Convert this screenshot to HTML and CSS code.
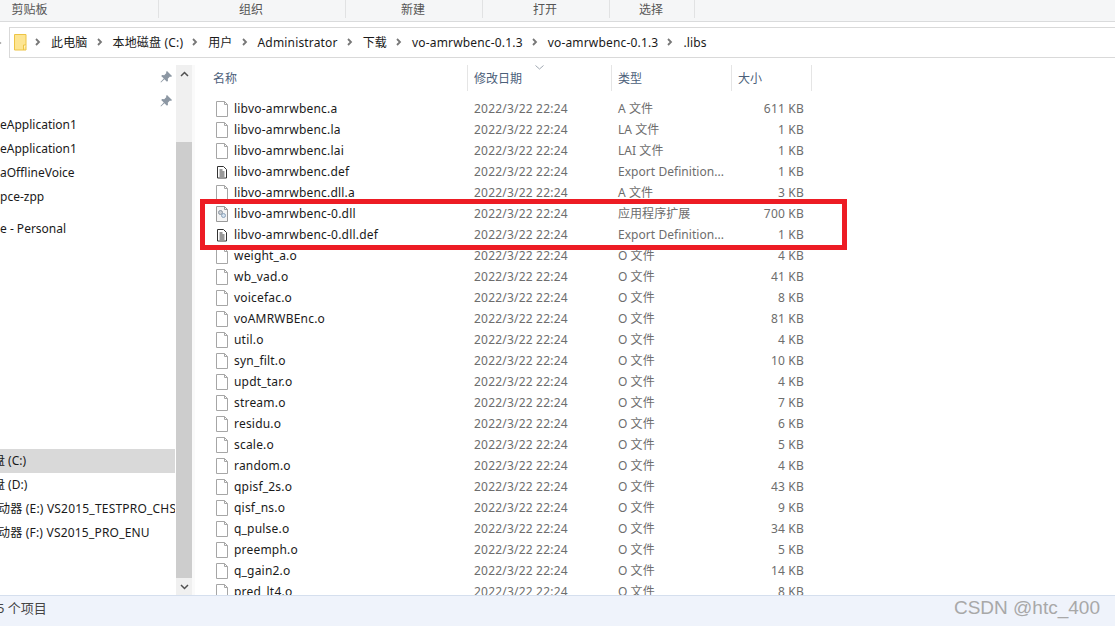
FILE: index.html
```html
<!DOCTYPE html>
<html lang="zh-CN">
<head>
  <meta charset="UTF-8" />
  <title>.libs</title>
  <link rel="stylesheet" href="styles.css">
</head>
<body>
  <div class="ribbon">
    <div class="ribbon-group first">剪贴板</div>
    <div class="ribbon-group w187">组织</div>
    <div class="ribbon-group w137">新建</div>
    <div class="ribbon-group w127">打开</div>
    <div class="ribbon-group w85">选择</div>
  </div>

  <div class="address">
    <svg class="chev cut" viewBox="0 0 8 8"><path d="M0 1l3 3-3 3" /></svg>
    <div class="address-bar">
      <svg class="folder" width="13" height="17" viewBox="0 0 13 17">
        <path d="M.5.500h11.500v15.500h-11.500z" fill="#fde592" stroke="#edc445" />
        <path d="M9.500 16v-5h2.500" fill="#fff3c4" stroke="#edc445" />
      </svg>
      <svg class="chev" viewBox="0 0 8 8"><path d="M2 1l3 3-3 3" /></svg><span>此电脑</span>
      <svg class="chev" viewBox="0 0 8 8"><path d="M2 1l3 3-3 3" /></svg><span>本地磁盘 (C:)</span>
      <svg class="chev" viewBox="0 0 8 8"><path d="M2 1l3 3-3 3" /></svg><span>用户</span>
      <svg class="chev" viewBox="0 0 8 8"><path d="M2 1l3 3-3 3" /></svg><span>Administrator</span>
      <svg class="chev" viewBox="0 0 8 8"><path d="M2 1l3 3-3 3" /></svg><span>下载</span>
      <svg class="chev" viewBox="0 0 8 8"><path d="M2 1l3 3-3 3" /></svg><span>vo-amrwbenc-0.1.3</span>
      <svg class="chev" viewBox="0 0 8 8"><path d="M2 1l3 3-3 3" /></svg><span>vo-amrwbenc-0.1.3</span>
      <svg class="chev" viewBox="0 0 8 8"><path d="M2 1l3 3-3 3" /></svg><span>.libs</span>
    </div>
  </div>

  <div class="main">
    <div class="nav">
      <div class="nav-pin">
        <svg width="12" height="12" viewBox="0 0 12 12"><path d="M7 0l5 5-1 1-1-.4-2.200 2.200.2 2-1 1-2.600-2.600L1 11.500l-.5-.5 3.300-3.400L1.200 5l1-1 2 .2L6.400 2 6 1z" fill="#8c97a3" /></svg>
      </div>
      <div class="nav-pin">
        <svg width="12" height="12" viewBox="0 0 12 12"><path d="M7 0l5 5-1 1-1-.4-2.200 2.200.2 2-1 1-2.600-2.600L1 11.500l-.5-.5 3.300-3.400L1.200 5l1-1 2 .2L6.400 2 6 1z" fill="#8c97a3" /></svg>
      </div>
      <div class="nav-item">eApplication1</div>
      <div class="nav-item">eApplication1</div>
      <div class="nav-item">aOfflineVoice</div>
      <div class="nav-item">pce-zpp</div>
      <div class="nav-item spaced">e - Personal</div>
      <div class="nav-item selected"><span class="cut-disk">盘 (C:)</span></div>
      <div class="nav-item"><span class="cut-disk">盘 (D:)</span></div>
      <div class="nav-item"><span class="cut-drive">动器 (E:) VS2015_TESTPRO_CHS</span></div>
      <div class="nav-item"><span class="cut-drive">动器 (F:) VS2015_PRO_ENU</span></div>
    </div>

    <div class="scrollbar">
      <div class="scroll-btn"><svg width="9" height="6" viewBox="0 0 9 6"><path d="M1 5l3.500-3.500L8 5" /></svg></div>
      <div class="scroll-track"><div class="scroll-thumb"></div></div>
      <div class="scroll-btn"><svg width="9" height="6" viewBox="0 0 9 6"><path d="M1 1l3.500 3.500L8 1" /></svg></div>
    </div>

    <div class="list">
      <div class="list-head">
        <div class="col-name">名称</div>
        <div class="col-date">修改日期<svg class="sort" width="9" height="5" viewBox="0 0 9 5"><path d="M.5.500l4 3.500 4-3.500" /></svg></div>
        <div class="col-type">类型</div>
        <div class="col-size">大小</div>
      </div>
      <div class="rows" id="rows"></div>
      <div class="highlight"></div>
    </div>
  </div>

  <div class="status"><span class="cut-count">5 个项目</span><span class="mark">CSDN @htc_400</span></div>

  <script>
    const files = [
      ['libvo-amrwbenc.a', 'A 文件', '611 KB', 'blank'],
      ['libvo-amrwbenc.la', 'LA 文件', '1 KB', 'blank'],
      ['libvo-amrwbenc.lai', 'LAI 文件', '1 KB', 'blank'],
      ['libvo-amrwbenc.def', 'Export Definition...', '1 KB', 'text'],
      ['libvo-amrwbenc.dll.a', 'A 文件', '3 KB', 'blank'],
      ['libvo-amrwbenc-0.dll', '应用程序扩展', '700 KB', 'dll'],
      ['libvo-amrwbenc-0.dll.def', 'Export Definition...', '1 KB', 'text'],
      ['weight_a.o', 'O 文件', '4 KB', 'blank'],
      ['wb_vad.o', 'O 文件', '41 KB', 'blank'],
      ['voicefac.o', 'O 文件', '8 KB', 'blank'],
      ['voAMRWBEnc.o', 'O 文件', '81 KB', 'blank'],
      ['util.o', 'O 文件', '4 KB', 'blank'],
      ['syn_filt.o', 'O 文件', '10 KB', 'blank'],
      ['updt_tar.o', 'O 文件', '4 KB', 'blank'],
      ['stream.o', 'O 文件', '7 KB', 'blank'],
      ['residu.o', 'O 文件', '6 KB', 'blank'],
      ['scale.o', 'O 文件', '5 KB', 'blank'],
      ['random.o', 'O 文件', '4 KB', 'blank'],
      ['qpisf_2s.o', 'O 文件', '43 KB', 'blank'],
      ['qisf_ns.o', 'O 文件', '9 KB', 'blank'],
      ['q_pulse.o', 'O 文件', '34 KB', 'blank'],
      ['preemph.o', 'O 文件', '5 KB', 'blank'],
      ['q_gain2.o', 'O 文件', '14 KB', 'blank'],
      ['pred_lt4.o', 'O 文件', '8 KB', 'blank']
    ];

    const icons = {
      blank: '<path d="M1.500.500h8l3 3v12h-11z" fill="#fff" stroke="#a6a6a6" /><path d="M9.500.500v3h3" fill="none" stroke="#a6a6a6" />',
      text: '<path d="M2.500 2.500h6l3 3v8.500h-9z" fill="#fff" stroke="#333" /><path d="M4.500 6h3M4.500 8h5M4.500 10h5M4.500 12h5" stroke="#333" fill="none" />',
      dll: '<path d="M1.500.500h8l3 3v12h-11z" fill="#f4f4f4" stroke="#999" /><path d="M9.500.500v3h3" fill="none" stroke="#999" /><circle cx="5.500" cy="6.500" r="2" fill="#c9ced4" stroke="#8c97a3" /><circle cx="8.500" cy="9.500" r="2" fill="#d5e2ef" stroke="#8ba3bb" />'
    };

    document.getElementById('rows').innerHTML = files.map(f => `<div class="row">
      <div class="col-name"><svg class="file-icon" width="14" height="16" viewBox="0 0 14 16">${icons[f[3]]}</svg>${f[0]}</div>
      <div class="col-date">2022/3/22 22:24</div>
      <div class="col-type">${f[1]}</div>
      <div class="col-size">${f[2]}</div>
    </div>`).join('');
  </script>
</body>
</html>
```

FILE: styles.css
```css
html, body {
  margin: 0;
  padding: 0;
  height: 626px;
  overflow: hidden;
  background: #fff;
  font-family: "Noto Sans", "Noto Sans CJK SC", sans-serif;
  font-size: 12px;
  color: #1a1a1a;
}

body {
  display: flex;
  flex-direction: column;
}

/* ribbon */
.ribbon {
  display: flex;
  height: 21px;
  flex: none;
  background: #f5f6f7;
  border-bottom: 1px solid #dadbdc;
  color: #555;
  overflow: hidden;
}

.ribbon-group {
  box-sizing: border-box;
  height: 18px;
  padding-right: 2px;
  line-height: 20px;
  text-align: center;
  border-right: 1px solid #e1e2e3;
  flex: none;
}

.ribbon-group.first { width: 159px; padding-right: 99px; }
.w187 { width: 187px; }
.w137 { width: 137px; }
.w127 { width: 127px; }
.w85 { width: 85px; }

/* address bar */
.address {
  display: flex;
  align-items: center;
  flex: none;
  height: 31px;
  margin-top: 5px;
  box-sizing: border-box;
}

.address-bar {
  display: flex;
  align-items: center;
  flex: 1;
  height: 31px;
  margin-left: 6px;
  padding: 0 0 1px 4px;
  box-sizing: border-box;
  letter-spacing: .17px;
  border-top: 1px solid #d9d9d9;
  border-bottom: 1px solid #d9d9d9;
  border-left: 1px solid #d9d9d9;
}

.folder { flex: none; margin-right: 7px; }

.chev {
  width: 8px;
  height: 8px;
  flex: none;
  margin: 0 9px 0 0;
}

.chev path {
  fill: none;
  stroke: #777;
  stroke-width: 1.800;
}

.chev.cut { width: 3px; margin: 0; }

.address-bar span { margin-right: 8px; white-space: nowrap; }

/* main area */
.main {
  display: flex;
  flex: 1;
  min-height: 0;
  margin-top: 7px;
}

.nav {
  width: 175px;
  flex: none;
  padding-right: 1px;
  overflow: hidden;
}

.nav-pin {
  display: flex;
  justify-content: flex-end;
  align-items: center;
  height: 24px;
  padding-right: 3px;
}

.nav-item {
  height: 24px;
  line-height: 24px;
  white-space: nowrap;
  overflow: hidden;
}

.nav-item.spaced { margin-top: 8px; margin-bottom: 208px; }
.nav-item.selected { background: #d9d9d9; }
.cut-disk { display: block; margin-left: -7px; }
.cut-drive { display: block; margin-left: -2px; letter-spacing: .2px; }

.scrollbar {
  width: 16px;
  flex: none;
  display: flex;
  flex-direction: column;
  background: #f0f0f0;
}

.scroll-btn {
  height: 17px;
  flex: none;
  display: flex;
  align-items: center;
  justify-content: center;
}

.scroll-btn path {
  fill: none;
  stroke: #505050;
  stroke-width: 1.500;
}

.scroll-track { flex: 1; padding-top: 60px; display: flex; }
.scroll-thumb { flex: 1; background: #cdcdcd; }

.list {
  position: relative;
  flex: 1;
  padding-left: 12px;
  border-left: 3px solid #fafafa;
  overflow: hidden;
}

.list-head, .row {
  display: flex;
  white-space: nowrap;
}

.list-head {
  height: 26px;
  line-height: 27px;
  color: #4c607a;
  margin-bottom: 7px;
}

.list-head > div {
  height: 26px;
  border-right: 1px solid #e5e5e5;
  box-sizing: border-box;
}

.col-name { width: 261px; padding-left: 8px; box-sizing: border-box; display: flex; align-items: center; }
.col-date { width: 144px; padding-left: 6px; box-sizing: border-box; position: relative; }
.col-type { width: 120px; padding-left: 6px; box-sizing: border-box; }
.col-size { width: 80px; padding: 0 8px 0 6px; box-sizing: border-box; text-align: right; }

.list-head .col-name { padding-left: 6px; }
.list-head .col-size { text-align: left; }

.sort {
  position: absolute;
  left: 67px;
  top: 0;
}

.sort path { fill: none; stroke: #a0a8b2; }

.row {
  height: 21px;
  line-height: 21px;
  letter-spacing: .2px;
}

.row .col-type { letter-spacing: .05px; }
.row .col-date, .row .col-type, .row .col-size { color: #6d6d6d; }

.file-icon { flex: none; margin-right: 5px; }

.highlight {
  position: absolute;
  left: 5px;
  top: 134px;
  width: 637px;
  height: 41px;
  border: 5px solid #ed1c24;
}

/* status */
.status {
  display: flex;
  justify-content: space-between;
  align-items: flex-start;
  height: 31px;
  flex: none;
  background: #eff3fb;
  border-top: 1px solid #d5dfee;
  box-sizing: border-box;
  color: #444;
  font-size: 13px;
}

.cut-count { display: block; margin: 2px 0 0 -3px; }

.mark {
  margin-right: 15px;
  font-family: "Liberation Sans", sans-serif;
  font-size: 19px;
  line-height: 24px;
  color: #a8a8a8;
}
```
